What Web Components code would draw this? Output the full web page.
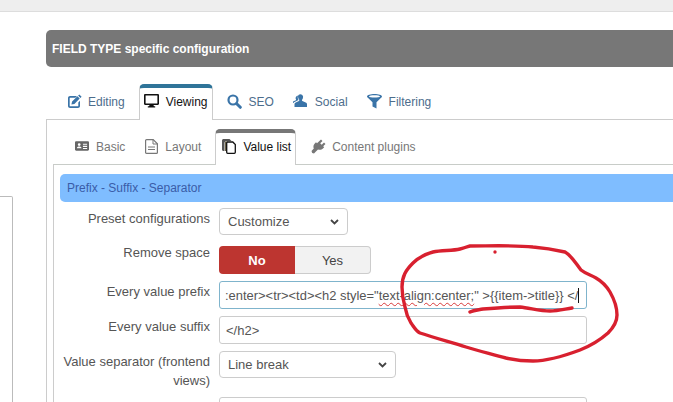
<!DOCTYPE html>
<html>
<head>
<meta charset="utf-8">
<title>Field configuration</title>
<style>
  html, body { margin: 0; height: 402px; overflow: hidden; background: #fff; font-family: "Liberation Sans", Arial, sans-serif; }
</style>
</head>
<body>
<page-shell>
  <side-box slot="side"></side-box>
  <config-panel title-text="FIELD TYPE specific configuration">
    <tab-bar slot="tabs" accent="#2f7499">
      <tab-item tone="blue"><svg slot="icon" width="14" height="14" viewBox="0 0 14 14"><path fill="#3a74a8" d="M2 2h7L7.300 3.700H2.300c-.4 0-.6.200-.6.600v7.400c0 .4.200.6.600.6h7.400c.4 0 .6-.2.600-.6V8.500L12 6.800v5.200c0 1.100-.9 2-2 2H2c-1.100 0-2-.9-2-2V4c0-1.100.9-2 2-2z"/><path fill="#3a74a8" d="M11.300.4l2.300 2.300-1.200 1.200-2.300-2.300zM9.400 2.300l2.300 2.300-5.300 5.300-3 .7.700-3z"/></svg>Editing</tab-item>
      <tab-item active><svg slot="icon" width="15" height="14" viewBox="0 0 15 14"><path fill="#111" d="M1.200 0h12.600c.7 0 1.200.5 1.200 1.200v8.600c0 .7-.5 1.200-1.200 1.200H9.500l.4 1.300h1.300V13.500H3.800v-1.200h1.300l.4-1.300H1.200C.5 11 0 10.500 0 9.800V1.200C0 .5.500 0 1.200 0zm.4 1.500v7.900h11.800V1.500z"/></svg>Viewing</tab-item>
      <tab-item tone="blue"><svg slot="icon" width="15" height="15" viewBox="0 0 15 15"><circle cx="6" cy="6" r="4.500" fill="none" stroke="#3a74a8" stroke-width="2.200"/><path stroke="#3a74a8" stroke-width="3" stroke-linecap="round" d="M9.700 9.700l3.600 3.600"/></svg>SEO</tab-item>
      <tab-item tone="blue"><svg slot="icon" width="15" height="14" viewBox="0 0 15 14"><path fill="#3a74a8" d="M5.500 1c1.500-1.300 4-.7 4.500 1.300.2 1-.1 2.300-.9 3.400-.3.500-.1 1 .3 1.200l3.300 1.600c.8.400 1.300.8 1.300 1.700V13H1.500v-2.800c0-.9.500-1.300 1.300-1.700l3.100-1.600c.5-.3.600-.7.300-1.200C5 4.400 4.600 2 5.500 1z"/><path fill="#3a74a8" d="M3.500 2.200c.6-.5 1.200-.6 1.500-.5-.5 1.300-.2 3 .5 4.200L1.600 8c-.4.200-.8.500-1.100.9H0V7.500l2.800-1.300c.3-.2.400-.5.200-.8-.6-1-.5-2.400.5-3.200z"/></svg>Social</tab-item>
      <tab-item tone="blue"><svg slot="icon" width="15" height="15" viewBox="0 0 15 15"><path fill="#3a74a8" fill-rule="evenodd" d="M7.500 0C11.600 0 15 1 15 2.400c0 .5-.4 1-.9 1.300L9.500 8.300V14.500L5.500 12.500V8.300L.9 3.700C.4 3.400 0 2.900 0 2.400 0 1 3.400 0 7.500 0zm0 1.300C4.600 1.300 2 1.800 2 2.400s2.600 1.100 5.500 1.100S13 3 13 2.400 10.400 1.300 7.500 1.300z"/></svg>Filtering</tab-item>
    </tab-bar>
    <sub-panel>
      <tab-bar slot="tabs" accent="#777" small>
        <tab-item tone="grey"><svg slot="icon" width="14" height="12" viewBox="0 0 15 12"><path fill="#666" fill-rule="evenodd" d="M1.300 1h12.400c.7 0 1.300.6 1.300 1.300v7.400c0 .7-.6 1.300-1.300 1.300H1.300C.6 11 0 10.400 0 9.700V2.300C0 1.600.6 1 1.300 1zM4.500 3a1.500 1.500 0 100 3 1.500 1.500 0 000-3zM2 8.500h5C7 7.300 6 6.600 4.500 6.600S2 7.300 2 8.500zM8.500 3.500v1.200H13V3.500zm0 2.300V7H13V5.800zm0 2.300v1H13v-1z"/></svg>Basic</tab-item>
        <tab-item tone="grey"><svg slot="icon" width="13" height="15" viewBox="0 0 13 15"><path fill="none" stroke="#777" stroke-width="1.200" d="M1.600.6h6.600l4.200 4.200v8.600c0 .6-.4 1-1 1H1.600c-.6 0-1-.4-1-1V1.600c0-.6.400-1 1-1z"/><path fill="none" stroke="#777" d="M8 .8v4.200h4.200M3 8h7M3 10.500h7"/></svg>Layout</tab-item>
        <tab-item active><svg slot="icon" width="14" height="15" viewBox="0 0 14 15"><path fill="#555" d="M1.500 0h6l2 2H4.500C3.400 2 2.500 2.900 2.500 4v8h-1C.7 12 0 11.300 0 10.500v-9C0 .7.700 0 1.500 0z"/><path fill="#6b6247" d="M3 2.500h3V12H3z"/><path fill="#fff" stroke="#111" stroke-width="1.300" d="M5.700 3h5.100l2.500 2.500v7.800c0 .6-.4 1-1 1H5.700c-.6 0-1-.4-1-1V4c0-.6.400-1 1-1z"/></svg>Value list</tab-item>
        <tab-item tone="grey" class="shift"><svg slot="icon" width="15" height="15" viewBox="0 0 15 15"><path fill="#777" d="M10 .5l1.500 1.500-2.300 2.300 1.500 1.500L13 3.500l1.500 1.500-2.300 2.300 1 1-1 1c-1.600 1.600-3.700 2-5.200 1.100l-2.300 2.300L3 14.500 1.200 14 .5 12l2.300-2.500C2 8 2.400 5.800 4 4.300l1-1 1 1z"/></svg>Content plugins</tab-item>
      </tab-bar>
      <section-bar>Prefix - Suffix - Separator</section-bar>
      <form-row label="Preset configurations" gap="11"><form-select width="129">Customize</form-select></form-row>
      <form-row label="Remove space" lift="4"><yes-no></yes-no></form-row>
      <form-row label="Every value prefix"><text-box focused>:enter&gt;&lt;tr&gt;&lt;td&gt;&lt;h2 style="<span class="typo">text-align:center;</span>" &gt;{{item-&gt;title}} &lt;/<i class="caret"></i></text-box></form-row>
      <form-row label="Every value suffix"><text-box>&lt;/h2&gt;</text-box></form-row>
      <form-row label="Value separator (frontend views)"><form-select width="177">Line break</form-select></form-row>
      <form-row label=""><text-box></text-box></form-row>
    </sub-panel>
  </config-panel>
  <red-scribble slot="over"></red-scribble>
</page-shell>

<style>
  .typo { text-decoration: underline wavy #d83a3a 1px; text-underline-offset: 2px; }
  .caret { display: inline-block; width: 1px; height: 15px; background: #111; vertical-align: -3px; }
  .shift { margin-left: 1px; --tab-gap: 6px; }
</style>

<script>
  class PageShell extends HTMLElement {
    constructor() {
      super();
      this.attachShadow({ mode: "open" }).innerHTML = `
        <style>
          :host { display: block; position: relative; width: 673px; height: 402px; overflow: hidden; }
          .top { height: 11px; background: #eee; border-bottom: 1px solid #ddd; }
          .main { display: flex; }
          .side { width: 46px; flex: none; padding-top: 184px; box-sizing: border-box; }
          .content { flex: 1; min-width: 0; padding-top: 18px; }
        </style>
        <div class="top"></div>
        <div class="main">
          <div class="side"><slot name="side"></slot></div>
          <div class="content"><slot></slot></div>
        </div>
        <slot name="over"></slot>`;
    }
  }

  class SideBox extends HTMLElement {
    constructor() {
      super();
      this.attachShadow({ mode: "open" }).innerHTML = `
        <style>
          :host { display: block; width: 13px; height: 240px; box-sizing: border-box; border: 1px solid #bbb; border-left: 0; border-radius: 0 2px 0 0; }
        </style>`;
    }
  }

  class ConfigPanel extends HTMLElement {
    constructor() {
      super();
      this.attachShadow({ mode: "open" }).innerHTML = `
        <style>
          :host { display: block; margin-right: -30px; }
          .head { height: 37px; display: flex; align-items: center; padding-left: 6px; background: #777; border-radius: 5px 0 0 5px; color: #fff; font: bold 12px "Liberation Sans", Arial, sans-serif; }
          .tabs { margin-top: 17px; position: relative; z-index: 1; }
          .body { margin-top: -1px; border-top: 1px solid #ccc; border-left: 1px solid #ccc; padding: 9px 0 0 6px; }
        </style>
        <div class="head"></div>
        <div class="tabs"><slot name="tabs"></slot></div>
        <div class="body"><slot></slot></div>`;
      this.shadowRoot.querySelector(".head").textContent = this.getAttribute("title-text");
    }
  }

  class SubPanel extends HTMLElement {
    constructor() {
      super();
      this.attachShadow({ mode: "open" }).innerHTML = `
        <style>
          :host { display: block; }
          .tabs { position: relative; z-index: 1; }
          .body { margin-top: -1px; border-top: 1px solid #c8ccc8; border-left: 1px solid #ccc; padding: 9px 0 0 6px; }
        </style>
        <div class="tabs"><slot name="tabs"></slot></div>
        <div class="body"><slot></slot></div>`;
    }
  }

  class TabBar extends HTMLElement {
    constructor() {
      super();
      this.attachShadow({ mode: "open" }).innerHTML = `
        <style>
          :host { display: flex; height: 36px; padding-left: 16.5px; gap: 9.5px; }
          :host([small]) { padding-left: 16px; gap: 8px; }
        </style>
        <slot></slot>`;
    }
    connectedCallback() {
      const small = this.hasAttribute("small");
      this.style.setProperty("--accent", this.getAttribute("accent"));
      this.style.setProperty("--pad", small ? "6px" : "5px");
      this.style.setProperty("--tab-gap", small ? "7px" : "6.5px");
      this.style.setProperty("--active-pad", small ? "6px" : "4px");
    }
  }

  class TabItem extends HTMLElement {
    constructor() {
      super();
      this.attachShadow({ mode: "open" }).innerHTML = `
        <style>
          :host { display: flex; align-items: center; gap: var(--tab-gap, 7px); box-sizing: border-box; height: 36px; padding: 0 var(--pad, 5px); font-size: 12px; white-space: nowrap; }
          :host([tone="blue"]) { color: #4d6d8c; }
          :host([tone="grey"]) { color: #777; }
          :host([active]) { color: #111; background: #fff; border: 1px solid #ccc; border-top: 4px solid var(--accent); border-bottom: 0; border-radius: 5px 5px 0 0; padding: 0 4px 4px var(--active-pad, 4px); }
          .icon { display: flex; align-items: center; margin-top: -2px; }
        </style>
        <span class="icon"><slot name="icon"></slot></span>
        <slot></slot>`;
    }
  }

  class SectionBar extends HTMLElement {
    constructor() {
      super();
      this.attachShadow({ mode: "open" }).innerHTML = `
        <style>
          :host { display: flex; align-items: center; height: 28px; padding-left: 7px; margin-bottom: 6px; background: #7fbdff; color: #3a5ca8; font-size: 12px; border-radius: 5px 0 0 5px; }
        </style>
        <slot></slot>`;
    }
  }

  class FormRow extends HTMLElement {
    constructor() {
      super();
      this.attachShadow({ mode: "open" }).innerHTML = `
        <style>
          :host { display: grid; grid-template-columns: 150px 1fr; column-gap: 9px; margin-bottom: 7px; width: 527px; }
          .label { padding-top: 1px; text-align: right; color: #555; font-size: 13px; line-height: 19px; }
          .field { min-width: 0; }
        </style>
        <div class="label"></div>
        <div class="field"><slot></slot></div>`;
      const label = this.shadowRoot.querySelector(".label");
      label.textContent = this.getAttribute("label");
      if (this.getAttribute("gap")) this.style.marginBottom = this.getAttribute("gap") + "px";
      if (this.getAttribute("lift")) label.style.marginTop = "-" + this.getAttribute("lift") + "px";
    }
  }

  class FormSelect extends HTMLElement {
    constructor() {
      super();
      this.attachShadow({ mode: "open" }).innerHTML = `
        <style>
          :host { display: flex; align-items: center; justify-content: space-between; box-sizing: border-box; height: 27px; padding: 0 8px 0 8px; border: 1px solid #ccc; border-radius: 4px; background: #fff; color: #555; font-size: 13px; }
        </style>
        <span><slot></slot></span>
        <svg width="9" height="6" viewBox="0 0 9 6"><path d="M1 1l3.500 3.500L8 1" fill="none" stroke="#444" stroke-width="1.800"/></svg>`;
      this.style.width = this.getAttribute("width") + "px";
    }
  }

  class YesNo extends HTMLElement {
    constructor() {
      super();
      this.attachShadow({ mode: "open" }).innerHTML = `
        <style>
          :host { display: flex; width: 152px; height: 28px; font-size: 13px; }
          div { display: flex; align-items: center; justify-content: center; box-sizing: border-box; }
          .no { width: 76px; background: #bd3530; color: #fff; font-weight: bold; border-radius: 4px 0 0 4px; }
          .yes { flex: 1; background: #f2f2f2; color: #444; border: 1px solid #ccc; border-left: 0; border-radius: 0 4px 4px 0; }
        </style>
        <div class="no">No</div>
        <div class="yes">Yes</div>`;
    }
  }

  class TextBox extends HTMLElement {
    constructor() {
      super();
      this.attachShadow({ mode: "open" }).innerHTML = `
        <style>
          :host { display: flex; align-items: center; box-sizing: border-box; width: 368px; height: 28px; padding: 0 6px; border: 1px solid #ccc; border-radius: 3px; background: #fff; color: #555; font-size: 13px; white-space: nowrap; overflow: hidden; }
          :host([focused]) { border-color: #7fb4cc; padding-left: 5px; font-size: 12.93px; }
        </style>
        <span><slot></slot></span>`;
    }
  }

  class RedScribble extends HTMLElement {
    constructor() {
      super();
      this.attachShadow({ mode: "open" }).innerHTML = `
        <style>
          :host { position: absolute; left: 0; top: 0; width: 673px; height: 402px; pointer-events: none; }
          svg { display: block; }
        </style>
        <svg width="673" height="402" viewBox="0 0 673 402" fill="none" stroke="#d8202f" stroke-linecap="round" stroke-linejoin="round">
          <path stroke-width="3.400" d="M402 287C402 276 406 270 413 263C419 257 426 254 433 252C442 250 452 251 460 249C464 248 466 247 470 246C490 246 515 245 533 247C545 248 556 250 565 252C572 256 576 264 581 270C586 274 591 275 596 278C603 282 607 287 610 292C614 299 617 306 617 315C617 322 613 328 608 333C599 341 590 346 580 350C564 356 549 361 533 361C523 361 515 360 506 358C492 354 479 351 466 347C450 342 435 338 420 333C416 331 414 327 411 323C408 318 406 313 405 307C403 300 402 294 402 287"/>
          <path stroke-width="3.400" d="M470 312C474 310 478 310 483 309C495 308 508 307 520 307C530 308 540 311 550 311C558 311 565 309 572 308"/>
          <circle cx="495" cy="252" r="1.700" fill="#d8202f" stroke="none"/>
        </svg>`;
    }
  }

  customElements.define("page-shell", PageShell);
  customElements.define("side-box", SideBox);
  customElements.define("config-panel", ConfigPanel);
  customElements.define("sub-panel", SubPanel);
  customElements.define("tab-bar", TabBar);
  customElements.define("tab-item", TabItem);
  customElements.define("section-bar", SectionBar);
  customElements.define("form-row", FormRow);
  customElements.define("form-select", FormSelect);
  customElements.define("yes-no", YesNo);
  customElements.define("text-box", TextBox);
  customElements.define("red-scribble", RedScribble);
</script>
</body>
</html>
